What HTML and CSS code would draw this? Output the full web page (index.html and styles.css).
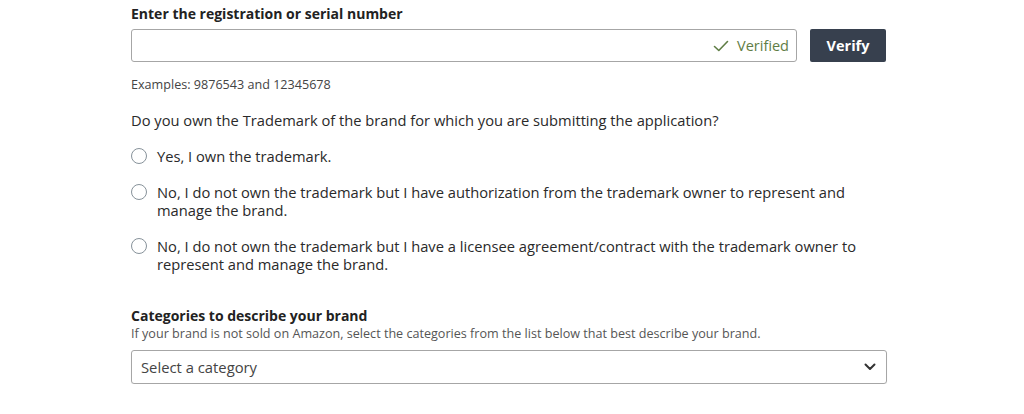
FILE: index.html
```html
<!DOCTYPE html>
<html lang="en">
<head>
<meta charset="utf-8">
<title>Brand registration</title>
<link rel="stylesheet" href="styles.css">
</head>
<body>
<main class="form">
  <section class="field">
    <label class="label" for="reg">Enter the registration or serial number</label>
    <div class="input-row">
      <div class="input-box">
        <input id="reg" class="input" type="text">
        <span class="verified">
          <svg class="check" viewBox="0 0 16 12" width="16" height="12" aria-hidden="true"><path d="M1.5 6.5 L5.8 10.5 L14.5 1.5" fill="none" stroke="currentColor" stroke-width="1.6" stroke-linecap="round" stroke-linejoin="round"/></svg>
          Verified
        </span>
      </div>
      <button class="btn" type="button">Verify</button>
    </div>
    <p class="hint">Examples: 9876543 and 12345678</p>
  </section>

  <section class="question">
    <p class="q-text">Do you own the Trademark of the brand for which you are submitting the application?</p>
    <ul class="options">
      <li class="option"><span class="radio"></span><span class="opt-text">Yes, I own the trademark.</span></li>
      <li class="option"><span class="radio"></span><span class="opt-text">No, I do not own the trademark but I have authorization from the trademark owner to represent and manage the brand.</span></li>
      <li class="option"><span class="radio"></span><span class="opt-text">No, I do not own the trademark but I have a licensee agreement/contract with the trademark owner to represent and manage the brand.</span></li>
    </ul>
  </section>

  <section class="categories">
    <h3 class="cat-title">Categories to describe your brand</h3>
    <p class="cat-sub">If your brand is not sold on Amazon, select the categories from the list below that best describe your brand.</p>
    <div class="select">
      <span class="select-text">Select a category</span>
      <svg class="chev" viewBox="0 0 12 8" width="12" height="8" aria-hidden="true"><path d="M1.5 1.5 L6 6 L10.5 1.5" fill="none" stroke="currentColor" stroke-width="2" stroke-linecap="round" stroke-linejoin="round"/></svg>
    </div>
  </section>
</main>
</body>
</html>
```
FILE: styles.css
```css
* { box-sizing: border-box; }
html, body { margin: 0; padding: 0; background: #fff; }
body {
  font-family: "Open Sans", "Noto Sans", "Liberation Sans", sans-serif;
  color: #2a2a2a;
}
.form {
  width: 756px;
  margin-left: 131px;
  padding-top: 5px;
}
.field { display: flex; flex-direction: column; }
.label {
  font-size: 14px;
  font-weight: 700;
  line-height: 18px;
  color: #222;
}
.input-row {
  display: flex;
  align-items: center;
  gap: 13px;
  margin-top: 6px;
}
.input-box {
  flex: 0 0 666px;
  height: 33px;
  border: 1px solid #a6a6a6;
  border-radius: 3px;
  display: flex;
  align-items: center;
  padding-right: 7px;
}
.input {
  flex: 1;
  border: 0;
  outline: none;
  background: transparent;
  height: 100%;
}
.verified {
  display: flex;
  align-items: center;
  gap: 8px;
  font-size: 14.5px;
  color: #5f7d45;
}
.check { color: #5f7d45; }
.btn {
  width: 76px;
  height: 33px;
  border: 0;
  border-radius: 2px;
  background: #37404e;
  color: #fff;
  font-family: inherit;
  font-size: 14.5px;
  font-weight: 700;
}
.hint {
  margin: 15px 0 0;
  font-size: 12.6px;
  line-height: 16px;
  color: #444;
}
.question { margin-top: 18px; }
.q-text {
  margin: 0;
  font-size: 14.7px;
  line-height: 18px;
  color: #2a2a2a;
}
.options {
  list-style: none;
  margin: 18px 0 0;
  padding: 0;
  display: flex;
  flex-direction: column;
  gap: 18px;
}
.option {
  display: flex;
  align-items: flex-start;
  gap: 10px;
}
.radio {
  flex: 0 0 16px;
  width: 16px;
  height: 16px;
  margin-top: 1px;
  border: 1.5px solid #87929a;
  border-radius: 50%;
}
.opt-text {
  font-size: 14.7px;
  line-height: 18px;
  color: #2a2a2a;
}
.categories { margin-top: 34px; }
.cat-title {
  margin: 0;
  font-size: 14px;
  font-weight: 700;
  line-height: 18px;
  color: #222;
}
.cat-sub {
  margin: 1px 0 0;
  font-size: 12.6px;
  line-height: 16px;
  color: #555;
}
.select {
  margin-top: 8px;
  height: 34px;
  border: 1px solid #a6a6a6;
  border-radius: 3px;
  display: flex;
  align-items: center;
  justify-content: space-between;
  padding: 0 10px 0 9px;
  box-shadow: 0 1px 1px rgba(0,0,0,0.08);
}
.select-text { font-size: 14.8px; color: #444; }
.chev { color: #333; }
```
